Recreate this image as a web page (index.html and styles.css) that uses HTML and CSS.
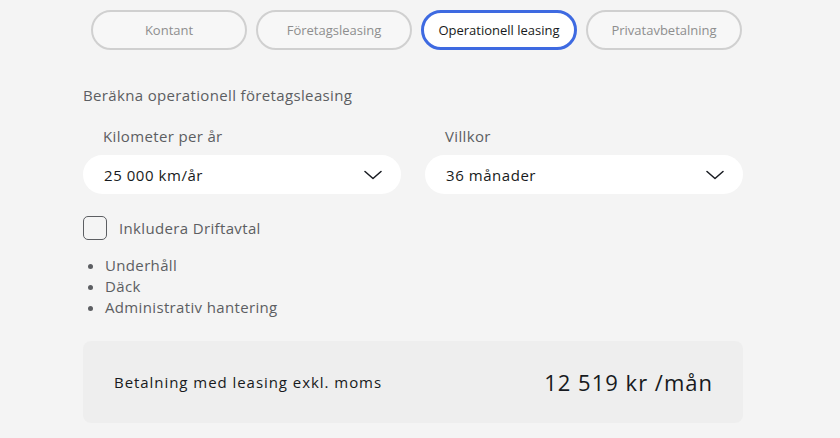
FILE: index.html
```html
<!DOCTYPE html>
<html lang="sv">
<head>
<meta charset="utf-8">
<link rel="stylesheet" href="styles.css">
</head>
<body>
<div class="page">
  <nav class="tabs">
    <button class="tab">Kontant</button>
    <button class="tab">Företagsleasing</button>
    <button class="tab active">Operationell leasing</button>
    <button class="tab">Privatavbetalning</button>
  </nav>
  <p class="heading">Beräkna operationell företagsleasing</p>
  <div class="fields">
    <div class="field">
      <div class="label">Kilometer per år</div>
      <div class="select">
        <span>25 000 km/år</span>
        <svg class="chev" width="18" height="10" viewBox="0 0 18 10"><path d="M1 1.5l8 7 8-7" fill="none" stroke="#171a20" stroke-width="1.5" stroke-linecap="round" stroke-linejoin="round"/></svg>
      </div>
    </div>
    <div class="field">
      <div class="label">Villkor</div>
      <div class="select">
        <span>36 månader</span>
        <svg class="chev" width="18" height="10" viewBox="0 0 18 10"><path d="M1 1.5l8 7 8-7" fill="none" stroke="#171a20" stroke-width="1.5" stroke-linecap="round" stroke-linejoin="round"/></svg>
      </div>
    </div>
  </div>
  <label class="check">
    <span class="box"></span>
    <span>Inkludera Driftavtal</span>
  </label>
  <ul class="list">
    <li>Underhåll</li>
    <li>Däck</li>
    <li>Administrativ hantering</li>
  </ul>
  <div class="summary">
    <span class="sum-label">Betalning med leasing exkl. moms</span>
    <span class="price">12 519 kr /mån</span>
  </div>
</div>
</body>
</html>
```
FILE: styles.css
```css
html, body {
  margin: 0;
  padding: 0;
  background: #f4f4f4;
}
body {
  font-family: "Open Sans", "Liberation Sans", sans-serif;
  color: #5c5e62;
  letter-spacing: 0.35px;
}
.page {
  width: 660px;
  padding: 10px 0 0 83px;
}
.tabs {
  display: flex;
  gap: 9px;
  margin-left: 8px;
}
.tab {
  width: 156px;
  height: 40px;
  border: 2px solid #d0d0d0;
  border-radius: 20px;
  background: #f7f7f7;
  font-family: inherit;
  font-size: 13px;
  letter-spacing: 0;
  color: #8e8e8e;
  padding: 0;
}
.tab.active {
  border: 3px solid #3e6ae1;
  background: #ffffff;
  color: #171a20;
}
.heading {
  margin: 35px 0 0 0;
  font-size: 15px;
  line-height: 20px;
}
.fields {
  display: flex;
  gap: 24px;
  margin-top: 21px;
}
.field {
  flex: 1;
}
.label {
  font-size: 15px;
  line-height: 20px;
  padding-left: 20px;
  margin-bottom: 9px;
}
.select {
  height: 39px;
  border-radius: 20px;
  background: #ffffff;
  display: flex;
  align-items: center;
  justify-content: space-between;
  padding: 0 19px 0 21px;
  font-size: 15px;
  letter-spacing: 0.55px;
  color: #171a20;
}
.check {
  display: flex;
  align-items: center;
  gap: 12px;
  margin-top: 22px;
  font-size: 15px;
}
.box {
  width: 22px;
  height: 22px;
  border: 1px solid #5c5e62;
  border-radius: 5px;
}
.list {
  margin: 15px 0 0 0;
  padding-left: 22px;
  font-size: 15px;
  line-height: 21px;
}
.summary {
  margin-top: 23px;
  height: 82px;
  background: #eeeeee;
  border-radius: 8px;
  display: flex;
  align-items: center;
  justify-content: space-between;
  padding: 0 30px 0 31px;
  color: #171a20;
}
.sum-label {
  font-size: 15px;
  letter-spacing: 0.95px;
}
.price {
  font-size: 22px;
  letter-spacing: 1px;
}
```
